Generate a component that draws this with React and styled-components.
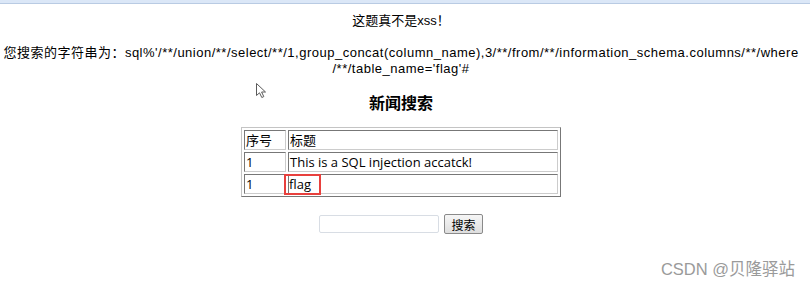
import React from "react";
import styled, { createGlobalStyle } from "styled-components";

const GlobalStyle = createGlobalStyle`
  html, body {
    margin: 0;
    padding: 0;
    background: #fff;
    width: 810px;
    height: 293px;
    overflow: hidden;
  }
  body {
    font-family: "Liberation Sans", "Noto Sans CJK SC", sans-serif;
    color: #000;
  }
`;

const TopBar = styled.div`
  height: 3px;
  background: #dbe7f7;
  border-bottom: 1px solid #b9cbe3;
`;

const Page = styled.div`
  position: relative;
  width: 802px;
  display: flex;
  flex-direction: column;
  align-items: center;
  text-align: center;
  font-size: 13px;
  line-height: 16px;
`;

const Title = styled.div`
  margin-top: 9px;
`;

const Query = styled.div`
  margin-top: 16px;
  display: flex;
  flex-direction: column;
  align-items: center;
  letter-spacing: 0.5px;
`;

const QueryLine = styled.span`
  white-space: nowrap;
`;

const Cursor = styled.svg`
  position: absolute;
  left: 255px;
  top: 78px;
`;

const Heading = styled.h3`
  margin: 17px 0 0;
  font-size: 16px;
  line-height: 20px;
  font-weight: bold;
`;

const Table = styled.table`
  margin-top: 13px;
  width: 320px;
  border: 1px solid #c4c4c4;
  border-right-color: #777;
  border-bottom-color: #777;
  border-spacing: 2px;
  font-family: "Open Sans", "Noto Sans CJK SC", sans-serif;
  font-size: 13px;
  text-align: left;
`;

const Cell = styled.td`
  border: 1px solid #777;
  border-right-color: #ccc;
  border-bottom-color: #ccc;
  padding: 0 1px;
  height: 18px;
  line-height: 18px;
  width: ${(p) => (p.$narrow ? "38px" : "auto")};
`;

const Marked = styled.span`
  display: inline-block;
  margin: -2px -4px -2px -6px;
  padding: 0 8px 0 3px;
  border: 2px solid #e8403d;
  line-height: 17px;
`;

const Form = styled.form`
  margin-top: 17px;
  display: flex;
  align-items: center;
  gap: 5px;
`;

const Input = styled.input`
  width: 114px;
  height: 14px;
  border: 1px solid #d8dde4;
  border-radius: 2px;
  padding: 1px 2px;
`;

const Button = styled.button`
  width: 39px;
  height: 20px;
  font-size: 12px;
  font-family: "Noto Sans CJK SC", sans-serif;
  border: 1px solid #8a8a8a;
  border-radius: 2px;
  background: linear-gradient(#f6f6f6, #dedede);
  padding: 0;
`;

const Watermark = styled.div`
  align-self: flex-end;
  margin-top: 27px;
  margin-right: 7px;
  font-size: 16.5px;
  color: #9a9a9a;
  font-family: "Liberation Sans", "Noto Sans CJK SC", sans-serif;
`;

export default function App() {
  return (
    <>
      <GlobalStyle />
      <TopBar />
      <Page>
        <Title>这题真不是xss！</Title>
        <Query>
          <QueryLine>
            您搜索的字符串为：sql%'/**/union/**/select/**/1,group_concat(column_name),3/**/from/**/information_schema.columns/**/where
          </QueryLine>
          <QueryLine>/**/table_name='flag'#</QueryLine>
        </Query>
        <Cursor viewBox="0 0 13 17" width="13" height="17">
          <path
            d="M1.5 1.5 L1.5 13.5 L4.5 10.8 L6.8 15.5 L8.8 14.6 L6.6 10 L10.5 10 Z"
            fill="#fff"
            stroke="#5a5a5a"
            strokeWidth="1"
            strokeLinejoin="round"
          />
        </Cursor>
        <Heading>新闻搜索</Heading>
        <Table>
          <tbody>
            <tr>
              <Cell $narrow>序号</Cell>
              <Cell>标题</Cell>
            </tr>
            <tr>
              <Cell $narrow>1</Cell>
              <Cell>This is a SQL injection accatck!</Cell>
            </tr>
            <tr>
              <Cell $narrow>1</Cell>
              <Cell>
                <Marked>flag</Marked>
              </Cell>
            </tr>
          </tbody>
        </Table>
        <Form onSubmit={(e) => e.preventDefault()}>
          <Input type="text" />
          <Button type="submit">搜索</Button>
        </Form>
        <Watermark>CSDN @贝隆驿站</Watermark>
      </Page>
    </>
  );
}
